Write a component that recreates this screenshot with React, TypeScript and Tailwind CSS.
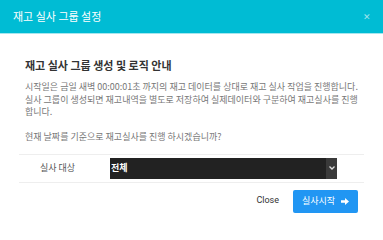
import React, { useState } from 'react';

const font = { fontFamily: '"Noto Sans CJK KR", "Noto Sans", sans-serif' };

const App: React.FC = () => {
  const [target, setTarget] = useState('전체');

  return (
    <div className="w-[383px] h-[240px] bg-white overflow-hidden" style={font}>
      {/* Header */}
      <div className="h-[34px] bg-[#00bcd4] border-b border-[#a6e6ee] flex items-center justify-between pl-[13px] pr-[12px]">
        <span className="text-[11px] text-white leading-none">재고 실사 그룹 설정</span>
        <span className="text-[9px] text-[#9fe3ec] leading-none">✕</span>
      </div>

      {/* Body */}
      <div className="pt-[24px] pl-[25px] pr-[20px]">
        <h4 className="text-[11px] font-bold text-[#333] leading-[14px]">재고 실사 그룹 생성 및 로직 안내</h4>
        <div className="mt-[9px] text-[9px] text-[#777] leading-[12.5px]">
          <p>시작일은 금일 새벽 00:00:01초 까지의 재고 데이터를 상대로 재고 실사 작업을 진행합니다.</p>
          <p>실사 그룹이 생성되면 재고내역을 별도로 저장하여 실제데이터와 구분하여 재고실사를 진행합니다.</p>
          <p className="mt-[12.5px]">현재 날짜를 기준으로 재고실사를 진행 하시겠습니까?</p>
        </div>
      </div>

      {/* Target row */}
      <div className="mx-[19px] mt-[10px] h-[29px] border-y border-[#eeeeee] flex items-center">
        <div className="w-[77px] text-center text-[9px] text-[#555]">실사 대상</div>
        <div className="ml-[14px] w-[227px] h-[21px] bg-[#222] flex items-stretch">
          <select
            value={target}
            onChange={(e) => setTarget(e.target.value)}
            className="flex-1 bg-transparent text-white text-[9px] font-bold pl-[1px] outline-none appearance-none"
          >
            <option value="전체">전체</option>
          </select>
          <div className="w-[11px] bg-[#3a3a3a] flex items-center justify-center">
            <svg width="6" height="4" viewBox="0 0 6 4">
              <path d="M0.5 0.5 L3 3 L5.5 0.5" stroke="#ddd" strokeWidth="1.3" fill="none" />
            </svg>
          </div>
        </div>
      </div>

      {/* Footer */}
      <div className="flex justify-end items-center mt-[7px] pr-[25px] gap-[14px]">
        <button className="text-[9px] text-[#333]" style={{ fontFamily: 'Roboto, sans-serif' }}>Close</button>
        <button className="w-[65px] h-[23px] bg-[#2196f3] rounded-[2px] text-white text-[9px] flex items-center justify-center gap-[6px]">
          실사시작
          <svg width="8" height="7" viewBox="0 0 8 7">
            <path d="M0 2.3 H4 V0 L8 3.5 L4 7 V4.7 H0 Z" fill="#fff" />
          </svg>
        </button>
      </div>
    </div>
  );
};

export default App;
